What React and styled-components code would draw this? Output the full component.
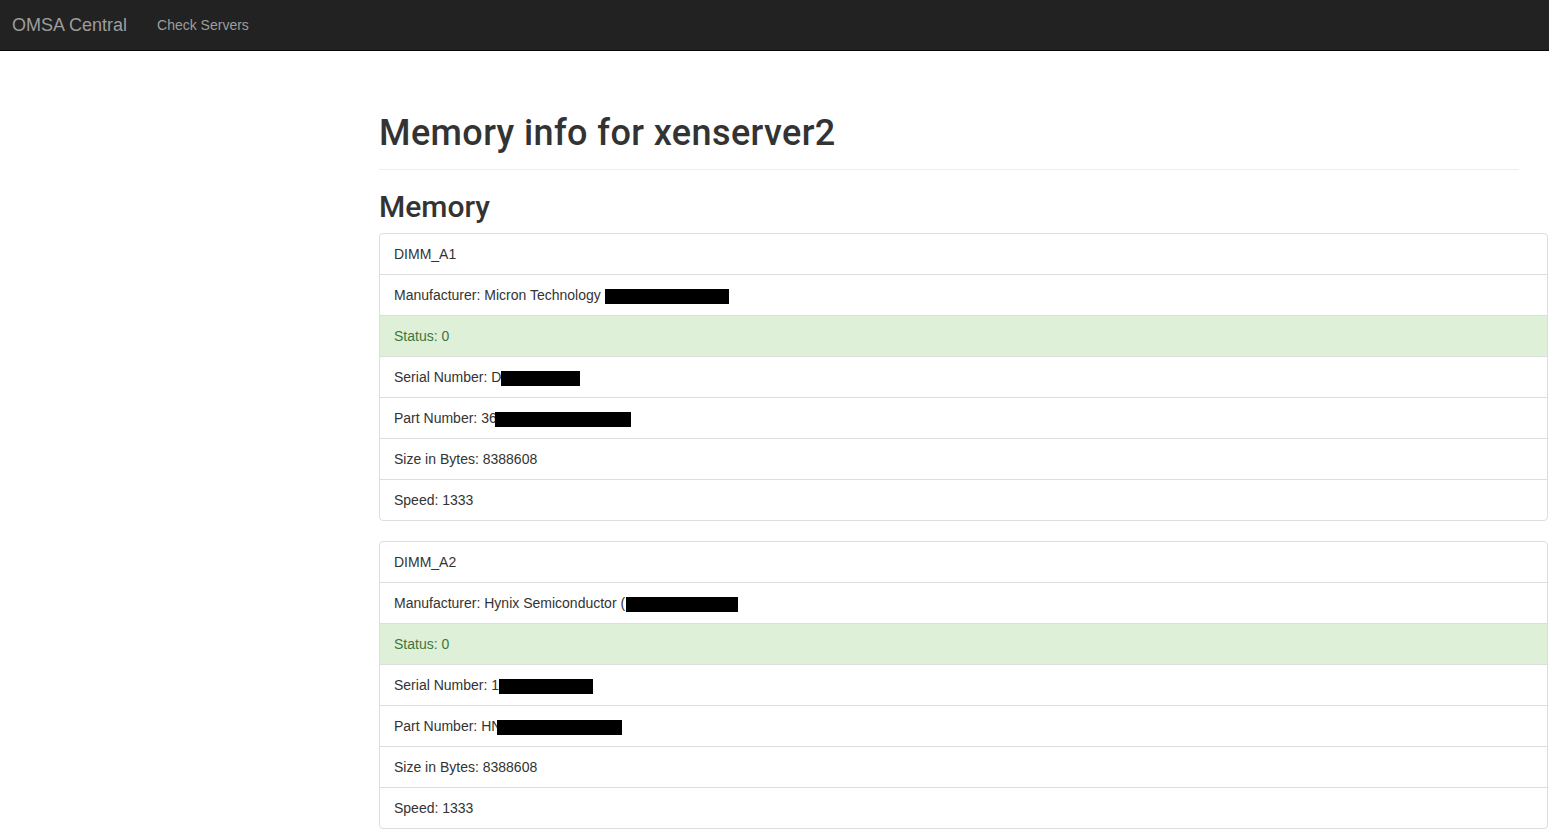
import styled, { createGlobalStyle } from 'styled-components';

const GlobalStyle = createGlobalStyle`
  * {
    box-sizing: border-box;
  }

  body {
    margin: 0;
    font-family: 'Liberation Sans', Arial, sans-serif;
    font-size: 14px;
    line-height: 20px;
    color: #333;
    background: #fff;
  }
`;

const dimms = [
  {
    name: 'DIMM_A1',
    rows: [
      { text: 'Manufacturer: Micron Technology', redact: 124, shift: 4 },
      { text: 'Status: 0', success: true },
      { text: 'Serial Number: D', redact: 79, shift: 0 },
      { text: 'Part Number: 36', redact: 136, shift: -2 },
      { text: 'Size in Bytes: 8388608' },
      { text: 'Speed: 1333' },
    ],
  },
  {
    name: 'DIMM_A2',
    rows: [
      { text: 'Manufacturer: Hynix Semiconductor (', redact: 112, shift: 1 },
      { text: 'Status: 0', success: true },
      { text: 'Serial Number: 1', redact: 94, shift: 0 },
      { text: 'Part Number: HN', redact: 125, shift: -4 },
      { text: 'Size in Bytes: 8388608' },
      { text: 'Speed: 1333' },
    ],
  },
];

const App = () => {
  return (
    <>
      <GlobalStyle />
      <Navbar>
        <Brand>OMSA Central</Brand>
        <NavLink>Check Servers</NavLink>
      </Navbar>
      <Main>
        <PageHeader>
          <Title>Memory info for xenserver2</Title>
        </PageHeader>
        <SubTitle>Memory</SubTitle>
        {dimms.map(dimm => (
          <ListGroup key={dimm.name}>
            <ListItem>{dimm.name}</ListItem>
            {dimm.rows.map((row, i) => (
              <ListItem key={i} success={row.success}>
                {row.text}
                {row.redact && <Redacted width={row.redact} shift={row.shift} />}
              </ListItem>
            ))}
          </ListGroup>
        ))}
      </Main>
    </>
  );
};

const Navbar = styled.nav`
  height: 51px;
  background-color: #222;
  border-bottom: 1px solid #080808;
  display: flex;
  align-items: center;
  padding-left: 12px;
`;

const Brand = styled.a`
  font-size: 18px;
  line-height: 20px;
  color: #9d9d9d;
  padding-right: 30px;
  cursor: pointer;
`;

const NavLink = styled.a`
  font-size: 14px;
  color: #9d9d9d;
  cursor: pointer;
`;

const Main = styled.div`
  padding-left: 379px;
  padding-top: 62px;
`;

const PageHeader = styled.div`
  width: 1140px;
  padding-bottom: 16px;
  border-bottom: 1px solid #eee;
  margin-bottom: 20px;
`;

const Title = styled.h1`
  margin: 0;
  font-family: Roboto, 'Liberation Sans', Arial, sans-serif;
  font-size: 36px;
  line-height: 40px;
  font-weight: 500;
  letter-spacing: 0.4px;
  color: #333;
`;

const SubTitle = styled.h2`
  margin: 0 0 10px;
  font-family: Roboto, 'Liberation Sans', Arial, sans-serif;
  font-size: 30px;
  line-height: 33px;
  font-weight: 500;
  color: #333;
`;

const ListGroup = styled.ul`
  width: 1169px;
  margin: 0 0 20px;
  padding: 0;
  list-style: none;
`;

const ListItem = styled.li`
  padding: 10px 15px 10px 14px;
  margin-bottom: -1px;
  border: 1px solid #ddd;
  background-color: ${props => (props.success ? '#dff0d8' : '#fff')};
  color: ${props => (props.success ? '#3c763d' : '#333')};

  &:first-child {
    border-top-left-radius: 4px;
    border-top-right-radius: 4px;
  }

  &:last-child {
    margin-bottom: 0;
    border-bottom-left-radius: 4px;
    border-bottom-right-radius: 4px;
  }
`;

const Redacted = styled.span`
  display: inline-block;
  width: ${props => props.width}px;
  height: 15px;
  margin-left: ${props => props.shift}px;
  vertical-align: -4px;
  background: #000;
`;

export default App;
